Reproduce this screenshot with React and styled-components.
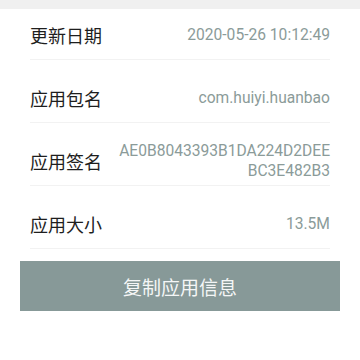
import React from "react";
import styled, { createGlobalStyle } from "styled-components";

const Global = createGlobalStyle`
  html, body { margin: 0; padding: 0; background: #ffffff; }
  body { width: 360px; height: 360px; overflow: hidden; }
`;

const Page = styled.div`
  width: 360px;
  height: 360px;
  background: #ffffff;
  display: flex;
  flex-direction: column;
`;

const TopBand = styled.div`
  height: 9px;
  background: #f0f0f0;
  flex: none;
`;

const List = styled.div`
  display: flex;
  flex-direction: column;
  padding: 0 30px;
`;

const Row = styled.div`
  display: flex;
  align-items: center;
  justify-content: space-between;
  height: ${(p) => (p.$first ? 48 : 48)}px;
  padding-top: ${(p) => (p.$first ? 2 : 14)}px;
  border-bottom: 1px solid #f2f2f2;
`;

const Label = styled.div`
  font-family: "Noto Sans CJK SC", "Noto Sans", sans-serif;
  font-size: 18px;
  line-height: 20px;
  color: #1e1e1e;
  white-space: nowrap;
`;

const Value = styled.div`
  font-family: Roboto, "Noto Sans", sans-serif;
  font-size: 15.6px;
  line-height: 20px;
  color: #8b9b99;
  text-align: right;
  word-break: break-all;
  max-width: 216px;
`;

const Button = styled.button`
  margin: 12px 20px 0;
  height: 50px;
  border: none;
  border-radius: 0;
  background: #879998;
  color: #f4f6f6;
  font-family: "Noto Sans CJK SC", "Noto Sans", sans-serif;
  font-size: 19px;
  display: flex;
  align-items: center;
  justify-content: center;
  padding: 0;
`;

const rows = [
  ["更新日期", "2020-05-26 10:12:49"],
  ["应用包名", "com.huiyi.huanbao"],
  ["应用签名", "AE0B8043393B1DA224D2DEEBC3E482B3"],
  ["应用大小", "13.5M"],
];

export default function App() {
  return (
    <Page>
      <Global />
      <TopBand />
      <List>
        {rows.map(([k, v], i) => (
          <Row key={k} $first={i === 0}>
            <Label>{k}</Label>
            <Value>{v}</Value>
          </Row>
        ))}
      </List>
      <Button>复制应用信息</Button>
    </Page>
  );
}
